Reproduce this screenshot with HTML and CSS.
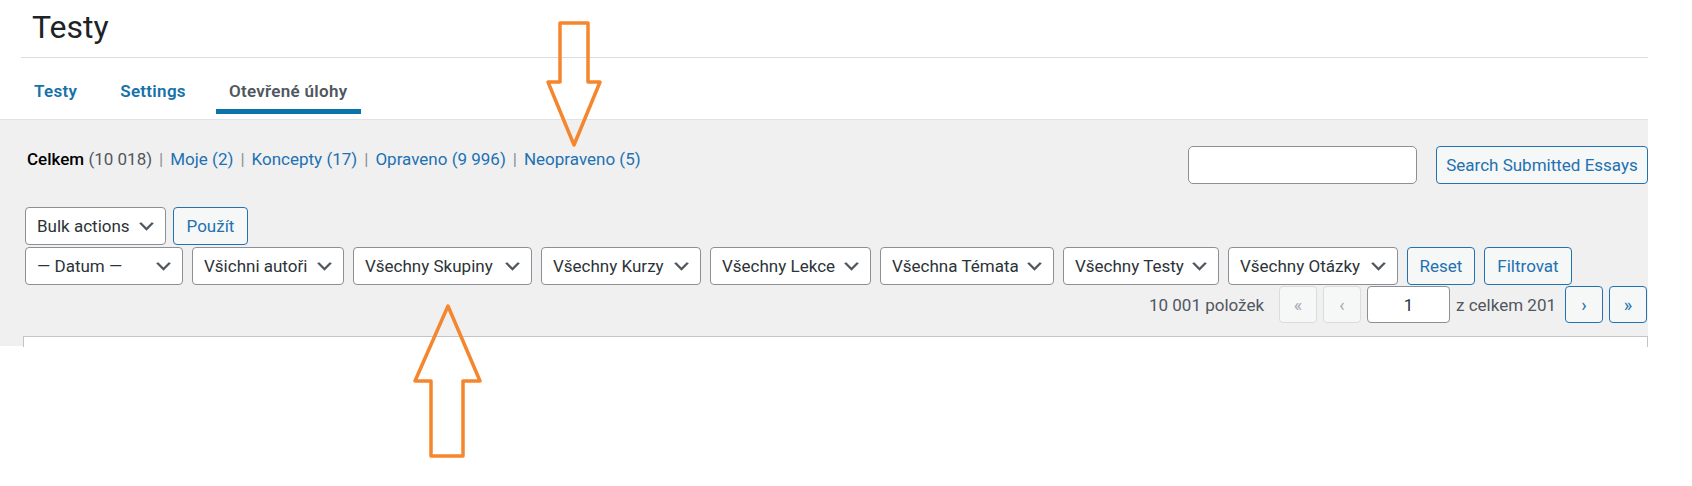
FILE: index.html
```html
<!DOCTYPE html>
<html lang="cs">
<head>
  <meta charset="UTF-8">
  <title>Testy - Otevřené úlohy</title>
  <link rel="stylesheet" href="styles.css">
</head>
<body>
  <div class="head">
    <h1 class="title">Testy</h1>
    <nav class="tabs">
      <a class="tab" href="#">Testy</a>
      <a class="tab" href="#">Settings</a>
      <a class="tab tab-active" href="#">Otevřené úlohy</a>
    </nav>
  </div>

  <div class="panel">
    <div class="top-row">
      <ul class="views">
        <li><a class="current" href="#">Celkem</a> <span class="count">(10 018)</span><span class="sep">|</span></li>
        <li><a href="#">Moje <span class="count">(2)</span></a><span class="sep">|</span></li>
        <li><a href="#">Koncepty <span class="count">(17)</span></a><span class="sep">|</span></li>
        <li><a href="#">Opraveno <span class="count">(9 996)</span></a><span class="sep">|</span></li>
        <li><a href="#">Neopraveno <span class="count">(5)</span></a></li>
      </ul>
      <div class="search">
        <input class="search-input" type="search">
        <button class="btn btn-search">Search Submitted Essays</button>
      </div>
    </div>

    <div class="row bulk-row">
      <div class="select w-bulk"><span>Bulk actions</span><svg viewBox="0 0 20 20"><path d="M5 6l5 5 5-5 2 1-7 7-7-7 2-1z"/></svg></div>
      <button class="btn w-apply">Použít</button>
    </div>

    <div class="row filter-row">
      <div class="select w-datum"><span>— Datum —</span><svg viewBox="0 0 20 20"><path d="M5 6l5 5 5-5 2 1-7 7-7-7 2-1z"/></svg></div>
      <div class="select w-autori"><span>Všichni autoři</span><svg viewBox="0 0 20 20"><path d="M5 6l5 5 5-5 2 1-7 7-7-7 2-1z"/></svg></div>
      <div class="select w-skupiny"><span>Všechny Skupiny</span><svg viewBox="0 0 20 20"><path d="M5 6l5 5 5-5 2 1-7 7-7-7 2-1z"/></svg></div>
      <div class="select w-kurzy"><span>Všechny Kurzy</span><svg viewBox="0 0 20 20"><path d="M5 6l5 5 5-5 2 1-7 7-7-7 2-1z"/></svg></div>
      <div class="select w-lekce"><span>Všechny Lekce</span><svg viewBox="0 0 20 20"><path d="M5 6l5 5 5-5 2 1-7 7-7-7 2-1z"/></svg></div>
      <div class="select w-temata"><span>Všechna Témata</span><svg viewBox="0 0 20 20"><path d="M5 6l5 5 5-5 2 1-7 7-7-7 2-1z"/></svg></div>
      <div class="select w-testy"><span>Všechny Testy</span><svg viewBox="0 0 20 20"><path d="M5 6l5 5 5-5 2 1-7 7-7-7 2-1z"/></svg></div>
      <div class="select w-otazky"><span>Všechny Otázky</span><svg viewBox="0 0 20 20"><path d="M5 6l5 5 5-5 2 1-7 7-7-7 2-1z"/></svg></div>
      <button class="btn w-reset">Reset</button>
      <button class="btn w-filter">Filtrovat</button>
    </div>

    <div class="pages">
      <span class="num">10 001 položek</span>
      <span class="page-btn disabled">«</span>
      <span class="page-btn disabled">‹</span>
      <input class="page-input" type="text" value="1">
      <span class="total">z celkem 201</span>
      <a class="page-btn" href="#">›</a>
      <a class="page-btn" href="#">»</a>
    </div>

    <div class="table-box"></div>
  </div>

  <!-- sipky pres screenshot -->
  <svg class="arrows" width="1692" height="486" viewBox="0 0 1692 486">
    <polygon points="560,23 588,23 588,82 600,82 574,145 548,82 560,82" />
    <polygon points="448,306 480,381 463,381 463,456 431,456 431,381 415,381" />
  </svg>
</body>
</html>
```

FILE: styles.css
```css
body {
  margin: 0;
  background: #fff;
  font-family: Roboto, "Liberation Sans", sans-serif;
  font-size: 17px;
  color: #3c434a;
  width: 1692px;
  height: 486px;
  overflow: hidden;
  position: relative;
}

a {
  text-decoration: none;
}

.head {
  margin-left: 21px;
  width: 1627px;
}

.title {
  margin: 0;
  padding: 7px 0 10px 11px;
  font-size: 32px;
  font-weight: 400;
  line-height: 40px;
  color: #1d2327;
  border-bottom: 1px solid #dcdcde;
}

.tabs {
  display: flex;
  gap: 17px;
  padding-top: 21px;
}

.tab {
  padding: 0 13px 6px;
  line-height: 24px;
  font-weight: 600;
  letter-spacing: 0.3px;
  color: #1572a9;
  border-bottom: 5px solid transparent;
}

.tab-active {
  color: #50575e;
  border-bottom-color: #0a73aa;
}

.panel {
  margin-top: 5px;
  width: 1648px;
  height: 227px;
  background: #f0f0f1;
  border-top: 1px solid #e2e2e4;
  padding-left: 25px;
  box-sizing: border-box;
}

.top-row {
  display: flex;
  justify-content: space-between;
  align-items: flex-start;
  padding-top: 26px;
}

.views {
  list-style: none;
  margin: 0;
  padding: 1px 0 0 2px;
  display: flex;
  line-height: 24px;
}

.views a {
  color: #2271b1;
}

.views a.current {
  color: #000;
  font-weight: 500;
}

.sep {
  color: #8c8f94;
  margin: 0 7px;
}

.count {
  color: #50575e;
}

.views a .count {
  color: #2271b1;
}

.search {
  display: flex;
  gap: 19px;
}

.search-input {
  width: 229px;
  height: 38px;
  box-sizing: border-box;
  border: 1px solid #8c8f94;
  border-radius: 5px;
  background: #fff;
}

.btn {
  height: 38px;
  box-sizing: border-box;
  border: 1px solid #2271b1;
  border-radius: 4px;
  background: #f6f7f7;
  color: #2271b1;
  font-family: inherit;
  font-size: 17px;
  padding: 0;
  text-align: center;
}

.btn-search {
  width: 212px;
}

.row {
  display: flex;
  gap: 9px;
}

.bulk-row {
  margin-top: 23px;
  gap: 7px;
}

.filter-row {
  margin-top: 2px;
}

.select {
  height: 38px;
  box-sizing: border-box;
  display: flex;
  align-items: center;
  justify-content: space-between;
  padding: 0 8px 0 11px;
  border: 1px solid #8c8f94;
  border-radius: 4px;
  background: #fff;
  color: #2c3338;
  white-space: nowrap;
}

.select svg {
  width: 21px;
  height: 21px;
  fill: #50575e;
  flex: none;
}

.w-bulk { width: 141px; }
.w-apply { width: 75px; }
.w-datum { width: 158px; }
.w-autori { width: 152px; }
.w-skupiny { width: 179px; }
.w-kurzy { width: 160px; }
.w-lekce { width: 161px; }
.w-temata { width: 174px; }
.w-testy { width: 156px; }
.w-otazky { width: 170px; }
.w-reset { width: 68px; }
.w-filter { width: 88px; }

.pages {
  display: flex;
  justify-content: flex-end;
  align-items: center;
  gap: 6px;
  margin-top: 1px;
  padding-right: 1px;
  color: #50575e;
}

.num {
  margin-right: 9px;
}

.page-btn {
  width: 38px;
  height: 37px;
  box-sizing: border-box;
  display: flex;
  align-items: center;
  justify-content: center;
  border: 1px solid #2271b1;
  border-radius: 4px;
  background: #f6f7f7;
  color: #2271b1;
  font-size: 18px;
}

.page-btn.disabled {
  border-color: #dcdcde;
  color: #a7aaad;
}

.page-input {
  width: 83px;
  height: 37px;
  box-sizing: border-box;
  border: 1px solid #8c8f94;
  border-radius: 4px;
  background: #fff;
  text-align: center;
  font-family: inherit;
  font-size: 17px;
  color: #2c3338;
}

.total {
  margin-right: 3px;
}

.table-box {
  margin: 13px 0 0 -2px;
  height: 10px;
  background: #fff;
  border: 1px solid #c3c4c7;
  border-bottom: none;
}

.arrows {
  position: absolute;
  top: 0;
  left: 0;
  pointer-events: none;
}

.arrows polygon {
  fill: none;
  stroke: #f5862e;
  stroke-width: 3.5;
  stroke-linejoin: round;
}
```
